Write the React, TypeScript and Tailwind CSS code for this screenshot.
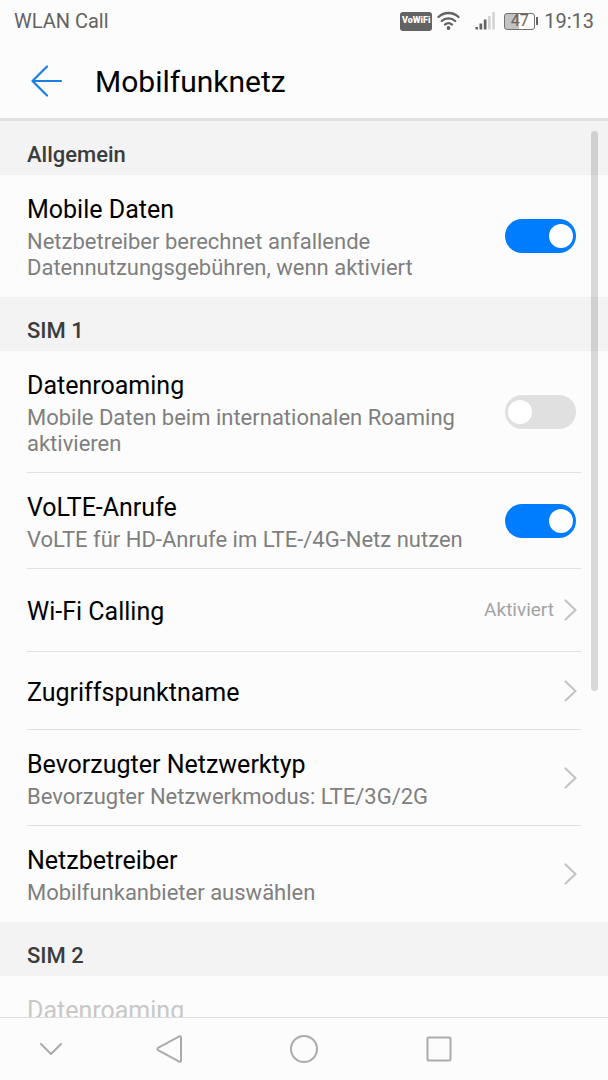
import { useState } from 'react'
import clsx from 'clsx'

interface RowTextProps {
  title: string
  summary?: string
  disabled?: boolean
}

function RowText({ title, summary, disabled }: RowTextProps) {
  return (
    <span className="flex flex-col gap-1 self-start pt-1 text-left">
      <span className={clsx('text-[25px] leading-[30px]', disabled ? 'text-[#c8c8c8]' : 'text-black')}>{title}</span>
      {summary && <span className="text-[22px] leading-[26px] text-[#7f7f7f]">{summary}</span>}
    </span>
  )
}

interface SwitchRowProps extends RowTextProps {
  initial?: boolean
  last?: boolean
}

function SwitchRow({ title, summary, disabled, initial = false, last }: SwitchRowProps) {
  const [on, setOn] = useState(initial)

  return (
    <label
      className={clsx(
        'mx-[27px] flex items-center justify-between gap-8 border-b pt-4 pb-[15px]',
        last ? 'border-transparent' : 'border-[#e2e2e2]',
        disabled && 'min-h-[122px]',
      )}
    >
      <RowText title={title} summary={summary} disabled={disabled} />
      <input
        type="checkbox"
        role="switch"
        checked={on}
        disabled={disabled}
        onChange={(e) => setOn(e.target.checked)}
        className="mr-[5px] flex h-[34px] w-[71px] shrink-0 appearance-none items-center rounded-full bg-[#e0e0e0] px-[3px] before:size-6 before:rounded-full before:bg-white before:content-[''] checked:justify-end checked:bg-[#007dff]"
      />
    </label>
  )
}

interface LinkRowProps extends RowTextProps {
  value?: string
  last?: boolean
}

function LinkRow({ title, summary, value, last }: LinkRowProps) {
  return (
    <a
      href="#"
      className={clsx(
        'mx-[27px] flex items-center justify-between gap-3 border-b',
        summary ? 'pt-4 pb-[15px]' : value ? 'py-6' : 'pt-[22px] pb-[21px]',
        last ? 'border-transparent' : 'border-[#e2e2e2]',
      )}
    >
      <RowText title={title} summary={summary} />
      <span className="mr-1 flex shrink-0 items-center gap-[10px] text-[19px] leading-6 text-[#a3a3a3]">
        {value}
        <svg width="13" height="22" viewBox="0 0 13 22" fill="none" stroke="#c4c4c4" strokeWidth="2.2" strokeLinecap="round" strokeLinejoin="round">
          <path d="M1.500 1.500 11.500 11 1.500 20.500" />
        </svg>
      </span>
    </a>
  )
}

function SectionHeader({ children }: { children: string }) {
  return <h2 className="bg-[#f3f3f3] px-[27px] pt-[21px] pb-[7px] text-[22px] leading-[26px] font-medium text-[#3c3c3c]">{children}</h2>
}

function StatusBar() {
  return (
    <div className="flex h-[42px] shrink-0 items-center justify-between px-[14px] text-[20px] text-[#636363]">
      <span>WLAN Call</span>
      <div className="flex items-center">
        <span className="flex h-[19px] w-8 items-center justify-center rounded-[3px] bg-[#636363] text-[9px] font-black text-white">VoWiFi</span>
        <svg className="ml-[5px]" width="23" height="20" viewBox="0 0 23 20" fill="none" stroke="#636363" strokeWidth="2.300" strokeLinecap="round">
          <path d="M1.500 6a14.500 14.500 0 0 1 20 0M4.800 10a9.800 9.800 0 0 1 13.400 0M8 13.600a5.200 5.200 0 0 1 7 0" />
          <circle cx="11.500" cy="17" r="1.900" fill="#636363" stroke="none" />
        </svg>
        <svg className="ml-[15px]" width="20" height="20" viewBox="0 0 20 20">
          <path d="M0.500 16h2.500v2.500H0.500zM4.500 12.500h2.700v6H4.500zM8.800 8.500h2.700v10H8.800z" fill="#636363" />
          <path d="M13 5h2.700v13.500H13zM17.200 1h2.700v17.500h-2.700z" fill="#d4d4d4" />
        </svg>
        <div className="ml-[9px] flex items-center gap-px">
          <span className="flex h-[17px] w-[31px] items-center justify-center rounded-[3px] border border-[#707070] bg-linear-to-r from-[#c2c2c2] from-47% to-transparent to-47% text-[16px] leading-4">
            47
          </span>
          <span className="h-2 w-[2px] bg-[#636363]" />
        </div>
        <span className="ml-[6px]">19:13</span>
      </div>
    </div>
  )
}

function NavigationBar() {
  return (
    <nav className="flex h-[63px] shrink-0 border-t border-[#dcdcdc] text-[#ababab]">
      <button type="button" aria-label="Leiste ausblenden" className="flex w-1/6 items-center justify-center">
        <svg width="22" height="12" viewBox="0 0 22 12" fill="none" stroke="currentColor" strokeWidth="2" strokeLinecap="round" strokeLinejoin="round">
          <path d="M1 1l10 10L21 1" />
        </svg>
      </button>
      <button type="button" aria-label="Zurück" className="flex flex-1 items-center justify-center">
        <svg width="26" height="28" viewBox="0 0 26 28" fill="none" stroke="currentColor" strokeWidth="2" strokeLinejoin="round">
          <path d="M23.300 1.300 2 12.800Q.8 14 2 15.200L23.300 26.700Q25 27.200 25 25.500V2.500Q25 .8 23.300 1.300Z" />
        </svg>
      </button>
      <button type="button" aria-label="Startseite" className="flex flex-1 items-center justify-center">
        <svg width="28" height="28" viewBox="0 0 28 28" fill="none" stroke="currentColor" strokeWidth="2">
          <circle cx="14" cy="14" r="13" />
        </svg>
      </button>
      <button type="button" aria-label="Letzte Apps" className="flex flex-1 items-center justify-center">
        <svg width="26" height="26" viewBox="0 0 26 26" fill="none" stroke="currentColor" strokeWidth="2">
          <rect x="1.500" y="1.500" width="23" height="23" rx="1" />
        </svg>
      </button>
      <div className="w-1/6" />
    </nav>
  )
}

export default function App() {
  return (
    <div className="flex h-screen flex-col bg-[#fcfcfc] font-[Roboto,sans-serif]">
      <StatusBar />
      <header className="flex h-[79px] shrink-0 items-center gap-8 border-b-3 border-[#e0e0e0] pt-[2px] pl-[31px]">
        <button type="button" aria-label="Zurück">
          <svg width="32" height="32" viewBox="0 0 32 32" fill="none" stroke="#1a7fe0" strokeWidth="2.200" strokeLinecap="round" strokeLinejoin="round">
            <path d="M16 1.500 1.500 16 16 30.500M1.500 16H30" />
          </svg>
        </button>
        <h1 className="pt-[2px] text-[30px] leading-9 text-black">Mobilfunknetz</h1>
      </header>

      <div className="relative min-h-0 flex-1">
        <main className="h-full overflow-hidden">
          <SectionHeader>Allgemein</SectionHeader>
          <SwitchRow title="Mobile Daten" summary="Netzbetreiber berechnet anfallende Datennutzungsgebühren, wenn aktiviert" initial last />

          <SectionHeader>SIM 1</SectionHeader>
          <SwitchRow title="Datenroaming" summary="Mobile Daten beim internationalen Roaming aktivieren" />
          <SwitchRow title="VoLTE-Anrufe" summary="VoLTE für HD-Anrufe im LTE-/4G-Netz nutzen" initial />
          <LinkRow title="Wi-Fi Calling" value="Aktiviert" />
          <LinkRow title="Zugriffspunktname" />
          <LinkRow title="Bevorzugter Netzwerktyp" summary="Bevorzugter Netzwerkmodus: LTE/3G/2G" />
          <LinkRow title="Netzbetreiber" summary="Mobilfunkanbieter auswählen" last />

          <SectionHeader>SIM 2</SectionHeader>
          <SwitchRow title="Datenroaming" disabled />
        </main>
        <div className="pointer-events-none absolute top-[10px] right-[10px] h-5/8 w-[7px] rounded-full bg-black/14" />
      </div>

      <NavigationBar />
    </div>
  )
}
